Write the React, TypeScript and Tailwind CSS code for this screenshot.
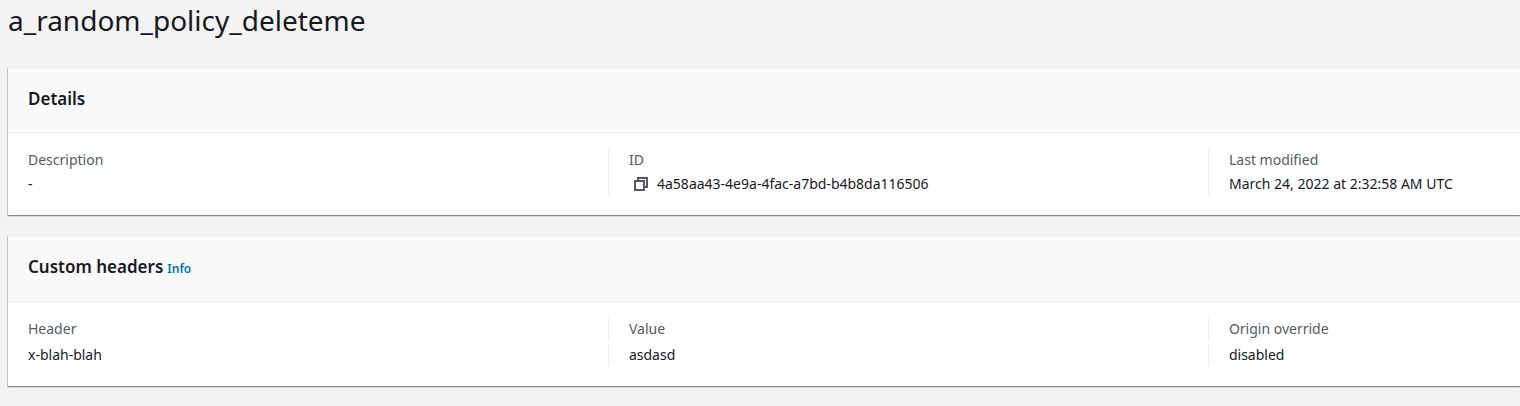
import type { ReactNode } from "react";

const details = [
  { label: "Description", value: "-" },
  { label: "ID", value: "4a58aa43-4e9a-4fac-a7bd-b4b8da116506", copyable: true },
  { label: "Last modified", value: "March 24, 2022 at 2:32:58 AM UTC" },
];

const columns = ["Header", "Value", "Origin override"];
const customHeaders = [["x-blah-blah", "asdasd", "disabled"]];

function CopyIcon() {
  return (
    <svg viewBox="0 0 16 16" className="h-4 w-4" fill="none" stroke="currentColor" strokeWidth="2" aria-hidden="true">
      <path d="M2 5h9v9H2z" />
      <path d="M5 5V2h9v9h-3" />
    </svg>
  );
}

function Panel({ title, info, children }: { title: string; info?: boolean; children: ReactNode }) {
  return (
    <section className="border-t border-[#eaeded] bg-white shadow-[0_1px_1px_0_rgba(0,28,36,0.3),1px_1px_1px_0_rgba(0,28,36,0.15),-1px_1px_1px_0_rgba(0,28,36,0.15)]">
      <div className="flex items-baseline gap-1 border-b border-[#eaeded] bg-[#fafafa] px-5 pt-[19px] pb-[21px]">
        <h2 className="text-[17px] leading-6 font-semibold">{title}</h2>
        {info && (
          <a href="#info" className="text-[12px] leading-[22px] font-semibold text-[#0073bb] hover:underline">
            Info
          </a>
        )}
      </div>
      {children}
    </section>
  );
}

export default function App() {
  return (
    <main className="min-h-screen overflow-x-hidden bg-[#f3f3f3] pb-5 pl-2 font-['Noto_Sans',sans-serif] text-[14px] leading-[22px] text-[#16191f]">
      <h1 className="pt-0.5 pb-[29px] text-[28px] leading-9">a_random_policy_deleteme</h1>

      <div className="flex flex-col gap-5">
        <Panel title="Details">
          <dl className="grid grid-cols-[25fr_25fr_13fr] pt-4 pb-5">
            {details.map((item) => (
              <div key={item.label} className="border-l border-[#eaeded] pl-5 first:border-l-0">
                <dt className="text-[#545b64]">{item.label}</dt>
                <dd className="mt-0.5 flex items-center whitespace-nowrap">
                  {item.copyable && (
                    <button type="button" aria-label="Copy ID" className="mr-2 ml-1 text-[#545b64] hover:text-[#16191f]">
                      <CopyIcon />
                    </button>
                  )}
                  {item.value}
                </dd>
              </div>
            ))}
          </dl>
        </Panel>

        <Panel title="Custom headers" info>
          <div className="pt-3 pb-4">
            <table className="w-full table-fixed border-separate border-spacing-x-0 border-spacing-y-1 text-left">
              <colgroup>
                <col className="w-[39.68%]" />
                <col className="w-[39.68%]" />
                <col />
              </colgroup>
              <thead>
                <tr>
                  {columns.map((name) => (
                    <th key={name} scope="col" className="border-l border-[#eaeded] p-0 pl-5 font-normal text-[#545b64] first:border-l-0">
                      {name}
                    </th>
                  ))}
                </tr>
              </thead>
              <tbody>
                {customHeaders.map((row) => (
                  <tr key={row[0]}>
                    {row.map((cell) => (
                      <td key={cell} className="border-l border-[#eaeded] p-0 pl-5 first:border-l-0">
                        {cell}
                      </td>
                    ))}
                  </tr>
                ))}
              </tbody>
            </table>
          </div>
        </Panel>
      </div>
    </main>
  );
}
